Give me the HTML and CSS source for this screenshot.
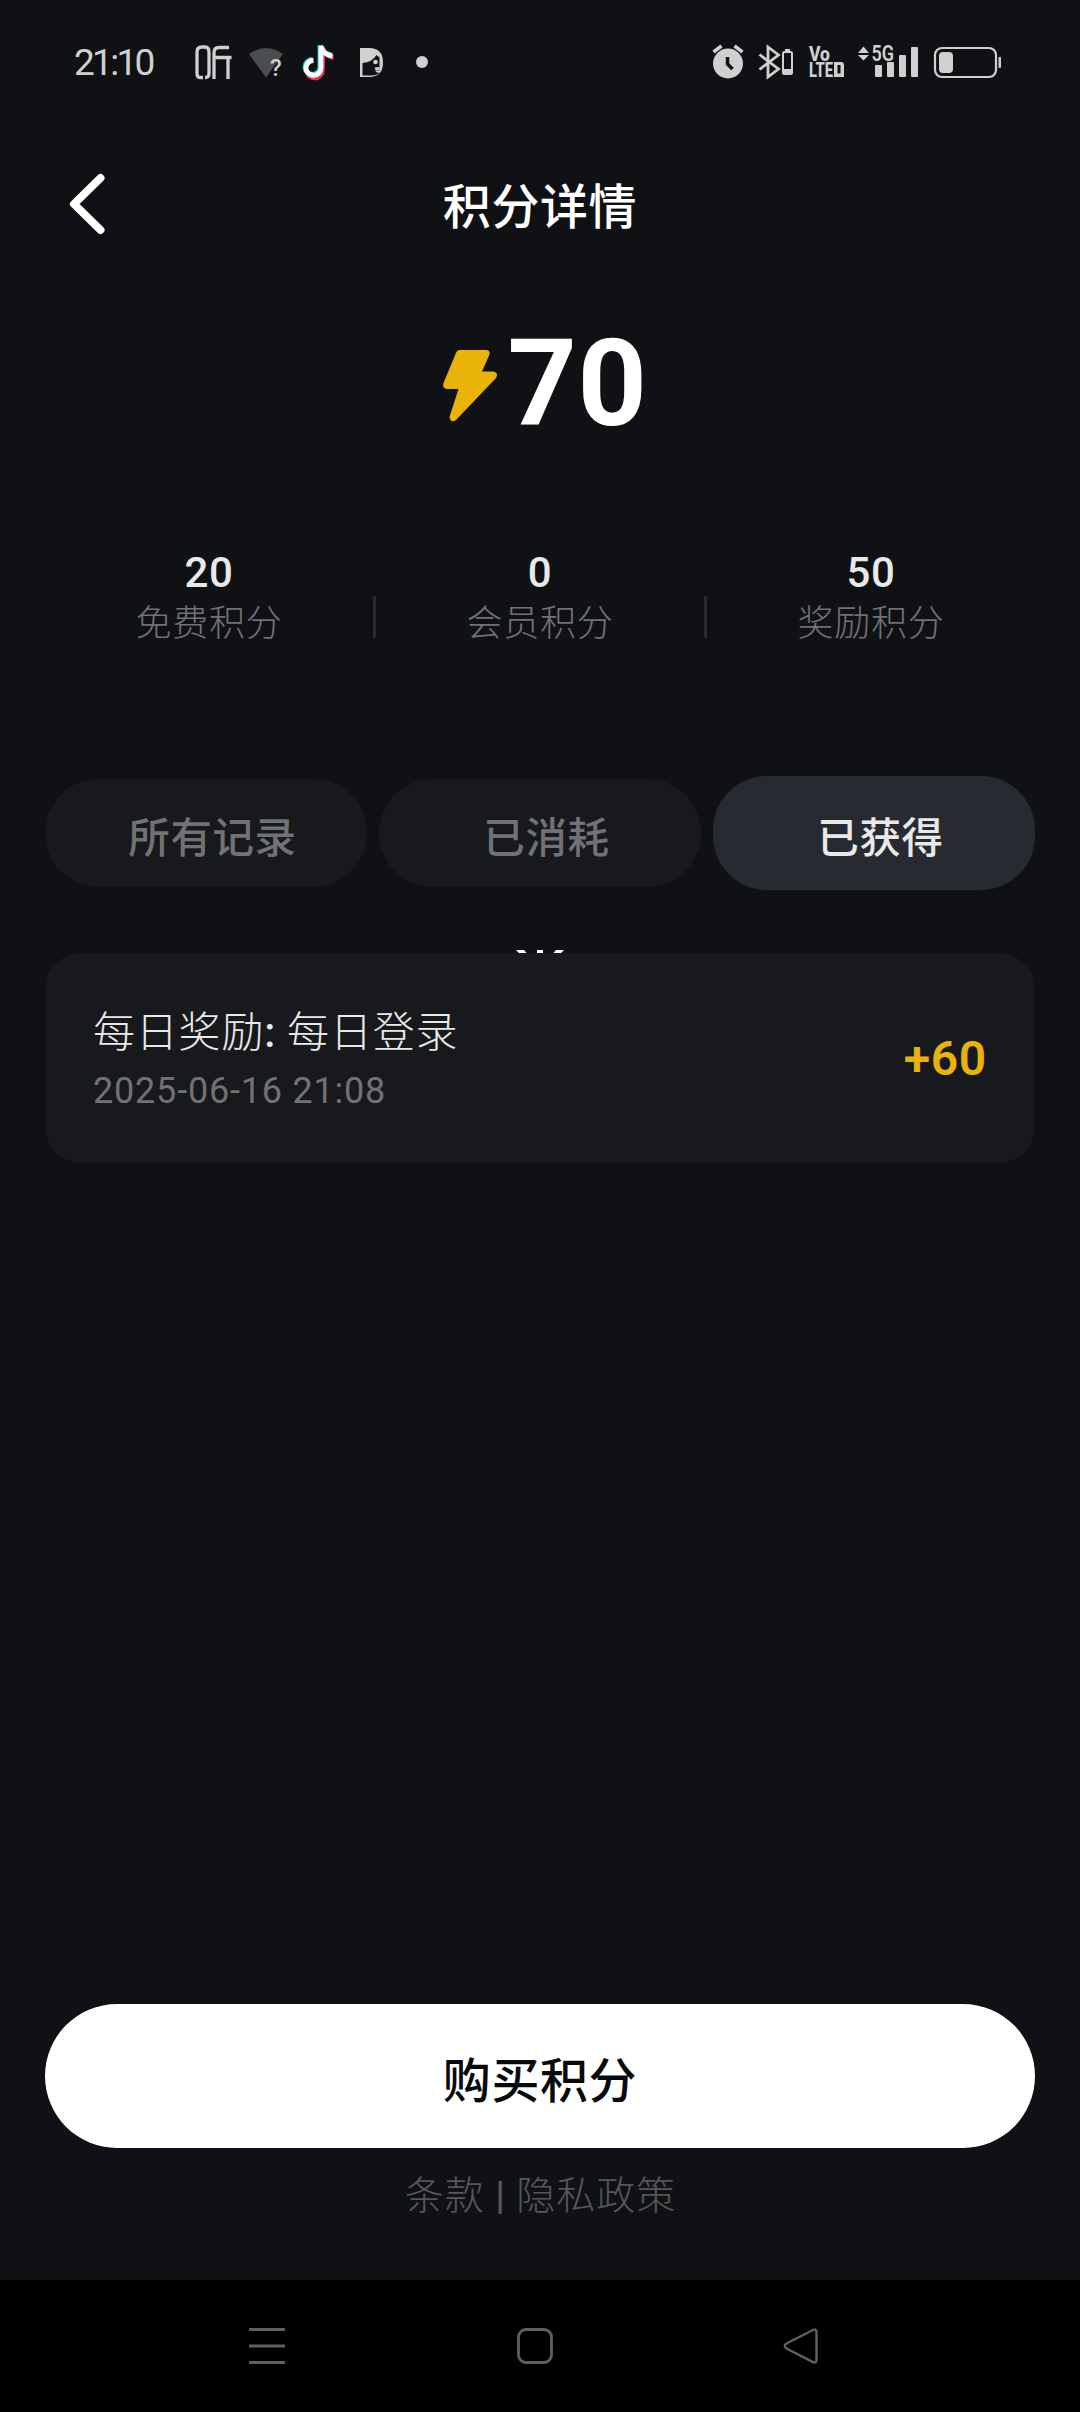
FILE: index.html
```html
<!DOCTYPE html>
<html lang="zh-CN">
<head>
<meta charset="utf-8">
<title>积分详情</title>
<link rel="stylesheet" href="styles.css">
</head>
<body>
<div class="screen">
  <header class="status">
    <span class="clock">21:10</span>
    <svg class="status-left" width="250" height="60" viewBox="190 30 250 60">
      <g fill="none" stroke="#d0d0d0" stroke-width="3.300">
        <path d="M203 77.500h-3q-3 0-3-4V52q0-5 5-5h3q4 0 4 5v22q0 3.500-4 3.500"/>
        <path d="M229 47.500H219q-5 0-5 5V79M214 57.500h17.500M228 58v21"/>
      </g>
      <path d="M249 54Q266 42 283 54L266 77.500Z" fill="#4b4c4e"/>
      <text x="270" y="76" class="wifi-mark">?</text>
      <g fill="none" stroke-width="4.800">
        <path d="M320 45V67A7.500 7.500 0 1 1 312.500 59.500M320 45Q321 53 331 54.500" stroke="#2fd5d6"/>
        <path d="M322.500 47V69A8 8 0 0 1 308 74.500M323 48Q325 56.500 333.500 57.500" stroke="#e8324f"/>
        <path d="M321 46V68A7.500 7.500 0 1 1 313.500 60.500M321 46Q323 55 332.500 56" stroke="#fff"/>
      </g>
      <path d="M360 48h9q14 0 14 14.500T369 77h-9Z" fill="#d0d0d0"/>
      <path d="M362.500 63q10-1 14-8l3 2.500v13h-4.500q1.500 3 5 2-3 3-9 3h-8.500Z" fill="#111216"/>
      <circle cx="375.500" cy="62" r="2.300" fill="#d0d0d0"/>
      <path d="M374.500 67.500l5-.5v3h-4z" fill="#d0d0d0"/>
      <circle cx="422" cy="62" r="6" fill="#d0d0d0"/>
    </svg>
    <svg class="status-right" width="310" height="60" viewBox="705 30 310 60" fill="#d0d0d0">
      <circle cx="728" cy="63.500" r="15"/>
      <path d="M713.500 52l8-6M742.500 52l-8-6" stroke="#d0d0d0" stroke-width="3.500"/>
      <path d="M727.500 57v7l5 5" fill="none" stroke="#111216" stroke-width="3.500"/>
      <path d="M759.500 54.500l19 14.500-10.500 8V47l10.500 8-19 14.500" fill="none" stroke="#d0d0d0" stroke-width="2.800"/>
      <rect x="783" y="52" width="9" height="22" rx="1.500" fill="none" stroke="#d0d0d0" stroke-width="2"/>
      <path d="M785 49h5v2h-5zM783 69h9v5h-9z"/>
      <text x="809" y="61" class="net" textLength="21" lengthAdjust="spacingAndGlyphs">Vo</text>
      <text x="809" y="76.800" class="net" textLength="24" lengthAdjust="spacingAndGlyphs">LTE</text>
      <path fill-rule="evenodd" d="M834 62h7q3 0 3 3v12h-10zM837.500 65v8.500h3V65z"/>
      <path d="M858 53h11l-5.500-6.500zM858 55h11l-5.500 5.500z"/>
      <text x="871.500" y="60.500" class="gen" textLength="22.500" lengthAdjust="spacingAndGlyphs">5G</text>
      <rect x="875" y="65" width="7" height="12" rx="1"/><rect x="887" y="62" width="7" height="15" rx="1"/>
      <rect x="899" y="55" width="7" height="22" rx="1"/><rect x="911" y="47" width="7" height="30" rx="1"/>
      <rect x="935" y="48" width="61" height="29" rx="7" fill="none" stroke="#d0d0d0" stroke-width="2.200"/>
      <rect x="939" y="52" width="14" height="21" rx="4"/><rect x="998.500" y="57" width="2.500" height="11" rx="1"/>
    </svg>
  </header>

  <nav class="topbar">
    <svg class="back" width="40" height="64" viewBox="0 0 40 64"><path d="M33.500 6L7 32 33.500 58" fill="none" stroke="#fff" stroke-width="8" stroke-linecap="round" stroke-linejoin="round"/></svg>
    <h1>积分详情</h1>
  </nav>

  <section class="total">
    <svg width="54" height="72" viewBox="0 0 54 72" fill="#e9b308"><path d="M17 0H43Q47.500 0 46.500 4.500L39 21.500H50Q56 22.500 53 28L13 70Q7.500 73.500 6.500 67L15.500 39H4Q-1 38.500.5 33L13 3Q14 0 17 0Z"/></svg>
    <span>70</span>
  </section>

  <section class="stats">
    <div class="stat"><b>20</b><span>免费积分</span></div>
    <i class="rule"></i>
    <div class="stat"><b>0</b><span>会员积分</span></div>
    <i class="rule"></i>
    <div class="stat"><b>50</b><span>奖励积分</span></div>
  </section>

  <div class="tabs">
    <button class="tab">所有记录</button>
    <button class="tab">已消耗</button>
    <button class="tab active">已获得</button>
  </div>

  <main class="records">
    <svg class="spinner" width="50" height="3" viewBox="0 0 50 3" fill="#fff"><path d="M1 0h8l2.500 3H4ZM22 0h6v3h-6ZM41 0h8l-3 3h-7.500Z"/></svg>
    <article class="record">
      <div class="info"><p class="name">每日奖励<b>:</b> 每日登录</p><time>2025-06-16 21:08</time></div>
      <strong>+60</strong>
    </article>
  </main>

  <footer class="bottom">
    <button class="buy">购买积分</button>
    <p class="legal">条款 <b>|</b> 隐私政策</p>
  </footer>

  <div class="sysnav">
    <svg width="36" height="36" viewBox="0 0 36 36" stroke="#606060" stroke-width="3"><path d="M0 1.500h36M0 18h36M0 34.500h36"/></svg>
    <svg class="home" width="36" height="36" viewBox="0 0 36 36" fill="none" stroke="#606060" stroke-width="2.800"><rect x="1.500" y="1.500" width="33" height="33" rx="7.500"/></svg>
    <svg width="36" height="36" viewBox="0 0 36 36" fill="none" stroke="#606060" stroke-width="2.500"><path d="M30 2L3.500 15.500Q0 18 3.500 20.500L30 34Q33.500 35.500 33.500 32V4Q33.500.5 30 2Z"/></svg>
  </div>
</div>
</body>
</html>
```
FILE: styles.css
```css
* { box-sizing: border-box; margin: 0; padding: 0; }
body { background: #101115; }
button { border: 0; font: inherit; letter-spacing: inherit; }
svg { display: block; flex: none; }
.screen {
  width: 1080px; height: 2412px; overflow: hidden;
  display: flex; flex-direction: column;
  background: #101115; color: #fff;
  font-family: Roboto, "Noto Sans CJK SC", sans-serif;
  letter-spacing: 1px;
}
.status { height: 126px; padding: 30px 65px 0 74px; display: flex; align-items: flex-start; }
.clock { width: 116px; padding-top: 1px; color: #d0d0d0; font-size: 37px; line-height: 64px; letter-spacing: -2.7px; white-space: nowrap; }
.status-right { margin-left: auto; }
.wifi-mark { font: 500 24px Roboto, sans-serif; fill: #d0d0d0; letter-spacing: 0; }
.net { font: 800 20px/1 Roboto, sans-serif; letter-spacing: 0; }
.gen { font: 600 22px Roboto, sans-serif; letter-spacing: 0; }

.topbar { height: 160px; padding: 0 67px; display: grid; grid-template-columns: 40px 1fr 40px; align-items: center; }
.back { margin-top: -4px; }
h1 { padding-top: 4px; font-size: 48px; font-weight: 500; line-height: 70px; text-align: center; letter-spacing: .6px; }

.total { height: 190px; padding-left: 10px; display: flex; justify-content: center; align-items: center; gap: 11px; }
.total span { padding-top: 6px; font-size: 121px; font-weight: 700; line-height: 140px; letter-spacing: .5px; }
.total svg { margin-top: 10px; }

.stats { height: 300px; padding: 68px 45px 0; display: flex; align-items: flex-start; }
.stat { flex: 1; padding-top: 1px; display: flex; flex-direction: column; align-items: center; color: #e9e9e9; }
.stat b { font-size: 42px; font-weight: 500; line-height: 56px; letter-spacing: .6px; }
.stat span { margin-top: 1px; color: #717275; font-size: 36px; font-weight: 300; line-height: 44px; letter-spacing: .7px; }
.rule { width: 3px; height: 42px; margin-top: 52px; background: #2a2b2f; }

.tabs { height: 114px; padding: 0 45px; display: grid; grid-template-columns: repeat(3, 1fr); gap: 12px; align-items: center; }
.tab { height: 108px; padding: 3px 0 0 13px; border-radius: 54px; background: #18191c; color: #717275; font-size: 41.5px; font-weight: 500; letter-spacing: .6px; }
.tab.active { height: 114px; background: #282a32; color: #e9e9e9; }

.records { flex: 1; padding: 60px 45px 0; }
.spinner { margin: 0 auto; }
.record { height: 210px; padding: 0 48px; border-radius: 36px; background: #18191c; display: flex; justify-content: space-between; align-items: center; }
.info { padding-top: 4px; }
.name { color: #e9e9e9; font-size: 42px; font-weight: 300; line-height: 62px; letter-spacing: .8px; }
.name b { font-weight: 500; }
time { display: block; color: #717275; font-size: 36px; line-height: 54px; letter-spacing: .8px; }
.record strong { color: #e9b308; font-size: 48px; font-weight: 600; letter-spacing: .7px; }

.bottom { height: 276px; padding: 0 45px; }
.buy { width: 100%; height: 144px; padding-top: 2px; border-radius: 72px; background: #fff; color: #080a0c; font-size: 48px; font-weight: 500; display: block; letter-spacing: .6px; }
.legal { padding-left: 1px; margin-top: 17px; color: #56575a; text-align: center; font-size: 39px; font-weight: 300; line-height: 62px; }
.legal b { font-weight: 500; }

.sysnav { height: 132px; padding: 0 261px 0 249px; background: #000; display: flex; justify-content: space-between; align-items: center; }
.home { margin-left: 2px; }
```
